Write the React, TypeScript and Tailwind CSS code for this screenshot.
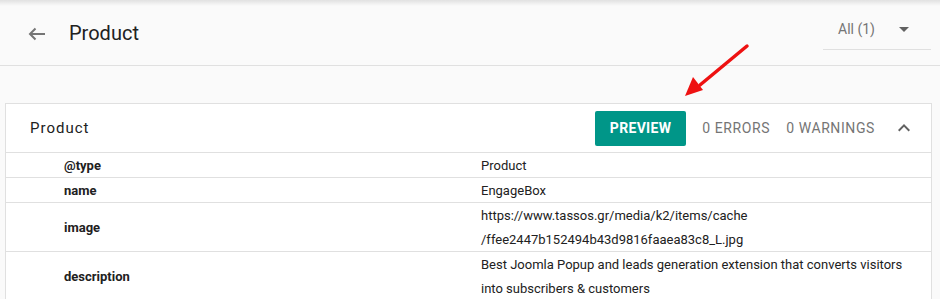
import React from 'react';

const rows: { key: string; value: string[] }[] = [
  { key: '@type', value: ['Product'] },
  { key: 'name', value: ['EngageBox'] },
  {
    key: 'image',
    value: ['https://www.tassos.gr/media/k2/items/cache', '/ffee2447b152494b43d9816faaea83c8_L.jpg'],
  },
  {
    key: 'description',
    value: ['Best Joomla Popup and leads generation extension that converts visitors', 'into subscribers & customers'],
  },
];

export default function App() {
  return (
    <div
      className="relative h-[299px] w-[940px] overflow-hidden bg-[#fafafa] text-[#212121]"
      style={{ fontFamily: 'Roboto, "Liberation Sans", sans-serif' }}
    >
      {/* top shadow */}
      <div className="absolute left-0 top-0 h-[6px] w-full bg-gradient-to-b from-black/10 to-transparent" />

      {/* Header */}
      <div className="flex h-[66px] items-center border-b border-[#e0e0e0] pl-[28px] pr-[9px]">
        <svg width="18" height="14" viewBox="0 0 18 14" className="mt-[2px] text-[#757575]">
          <path d="M17 7H2M7.5 1.5L2 7l5.5 5.5" fill="none" stroke="currentColor" strokeWidth="2" />
        </svg>
        <h1 className="ml-[23px] text-[20px] leading-none">Product</h1>
        <div className="ml-auto mt-[-5px] flex h-[40px] w-[108px] items-center border-b border-[#e0e0e0] pl-[15px] text-[14px] text-[#757575]">
          <span>All (1)</span>
          <svg width="10" height="5" viewBox="0 0 10 5" className="ml-auto mr-[22px]">
            <path d="M0 0l5 5 5-5z" fill="#616161" />
          </svg>
        </div>
      </div>

      {/* Card */}
      <div className="ml-[5px] mt-[37px] w-[927px] border border-[#e0e0e0] bg-white">
        <div className="flex h-[49px] items-center border-b border-[#e0e0e0] pl-[24px] pr-[21px]">
          <span className="text-[15px] tracking-[1px] text-[#212121]">Product</span>
          <button className="ml-auto h-[35px] rounded-[2px] bg-[#009688] px-[15px] text-[14px] font-bold tracking-[0.3px] text-white">
            PREVIEW
          </button>
          <span className="ml-[16px] text-[14px] tracking-[0.6px] text-[#757575]">0 ERRORS</span>
          <span className="ml-[16px] text-[14px] tracking-[0.6px] text-[#757575]">0 WARNINGS</span>
          <svg width="12" height="8" viewBox="0 0 12 8" className="ml-[23px]">
            <path d="M1.4 7.4L6 2.8l4.6 4.6L12 6 6 0 0 6z" fill="#616161" />
          </svg>
        </div>
        {rows.map((row) => (
          <div key={row.key} className="grid grid-cols-[475px_1fr] border-b border-[#e0e0e0] text-[13px] leading-[24px]">
            <div className="flex translate-y-[1px] items-center pl-[58px] font-bold">{row.key}</div>
            <div className="translate-y-[1px]">
              {row.value.map((line) => (
                <div key={line}>{line}</div>
              ))}
            </div>
          </div>
        ))}
      </div>

      {/* Red annotation arrow */}
      <svg className="pointer-events-none absolute left-0 top-0" width="940" height="299">
        <line x1="747" y1="46" x2="700" y2="85" stroke="#ee1111" strokeWidth="3.5" strokeLinecap="round" />
        <polygon points="685,96 693,77 703,90" fill="#ee1111" />
      </svg>
    </div>
  );
}
